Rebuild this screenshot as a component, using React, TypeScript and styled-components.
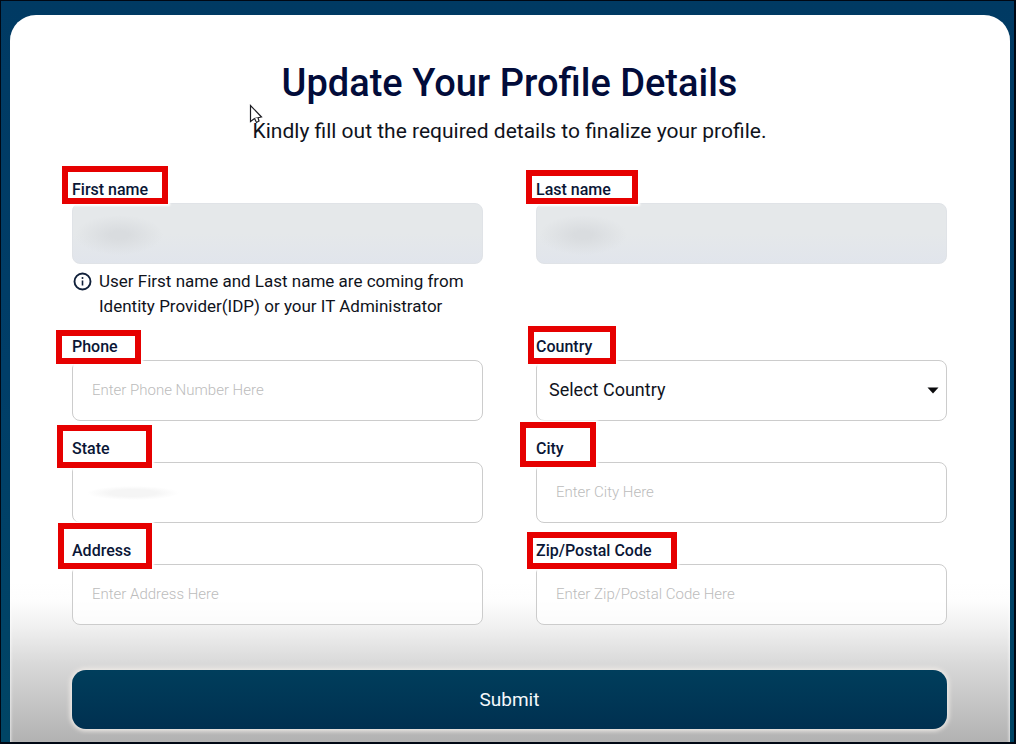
import React from "react";
import styled, { createGlobalStyle } from "styled-components";

const GlobalStyle = createGlobalStyle`
  *, *::before, *::after { box-sizing: border-box; }
  body { margin: 0; background: #003a63; font-family: Roboto, "Liberation Sans", sans-serif; color: #10131c; }
  input, select, button { font-family: inherit; }
`;

const Page = styled.main`
  display: flex;
  min-height: 100vh;
  padding: 14px 4px 0 9px;
  border: 1px solid #000814;
  border-width: 1px 2px 2px 1px;
  background: linear-gradient(180deg, #003a63 0%, #003e68 50%, #004565 100%);
`;

const Card = styled.section`
  flex: 1;
  min-width: 0;
  padding: 46px 63px 13px 62px;
  border-radius: 26px 26px 0 0;
  background: linear-gradient(0deg, #b2b2b2 0, #c6c6c6 40px, #dadada 80px, #efefef 113px, #fdfdfd 140px, #ffffff 160px);
  box-shadow: inset 3px 0 3px -2px #ffffffaa, inset -3px 0 3px -2px #ffffffaa;
`;

const Header = styled.header`
  text-align: center;
`;

const Title = styled.h1`
  margin: 0;
  font-size: 38px;
  line-height: 44px;
  font-weight: 500;
  color: #020c3a;
`;

const Subtitle = styled.p`
  position: relative;
  width: fit-content;
  margin: 13px auto 36px;
  font-size: 21px;
  line-height: 26px;
`;

const Pointer = styled.svg`
  position: absolute;
  left: -4px;
  top: -14px;
  width: 14px;
  height: 22px;
`;

const Form = styled.form`
  display: grid;
  grid-template-columns: 1fr 1fr;
  column-gap: 53px;
  row-gap: 18px;
`;

const Field = styled.div`
  display: flex;
  flex-direction: column;
  gap: 3px;
  min-width: 0;
`;

const LabelRow = styled.div`
  position: relative;
  line-height: 20px;
`;

const Label = styled.label`
  display: block;
  font-size: 16px;
  font-weight: 500;
  color: #0a1636;
`;

const Callout = styled.span<{ $x: number; $y: number; $w: number; $h: number }>`
  position: absolute;
  z-index: 1;
  left: ${(p) => p.$x}px;
  top: ${(p) => p.$y}px;
  width: ${(p) => p.$w}px;
  height: ${(p) => p.$h}px;
  border: 6px solid #e60000;
  box-shadow: 0 0 2px 2px #ffffff;
  pointer-events: none;
`;

const TextInput = styled.input<{ $smudge?: boolean }>`
  width: 100%;
  height: 61px;
  padding: 0 19px 2px;
  border: 1px solid #cccccc;
  border-radius: 8px;
  outline: none;
  background: ${(p) =>
    p.$smudge
      ? "radial-gradient(ellipse 46px 7px at 60px 30px, #f5f5f5 50%, #ffffff00 100%), #ffffff"
      : "#ffffffb8"};
  font-size: 15px;
  font-weight: 300;

  &::placeholder { color: #bcbcbc; opacity: 1; }

  &:disabled {
    border-color: #e0e3e7;
    background: radial-gradient(ellipse 44px 20px at 46px 31px, #d9dcdf 20%, #d9dcdf00 100%),
      linear-gradient(180deg, #e5e8ea 50%, #e1e5ec 100%);
  }
`;

const SelectWrap = styled.div`
  position: relative;
`;

const Select = styled.select`
  display: block;
  width: 100%;
  height: 61px;
  padding: 0 32px 2px 12px;
  border: 1px solid #cccccc;
  border-radius: 8px;
  outline: none;
  appearance: none;
  background: #ffffff;
  font-size: 18px;
  color: #10131c;
`;

const Caret = styled.svg`
  position: absolute;
  right: 8px;
  top: 27px;
  width: 12px;
  height: 7px;
  pointer-events: none;
`;

const Hint = styled.p`
  display: flex;
  gap: 7px;
  margin: 2px 0 0 1px;
  font-size: 17px;
  line-height: 25px;
`;

const InfoIcon = styled.svg`
  flex: none;
  width: 19px;
  height: 19px;
  margin-top: 3px;
`;

const Submit = styled.button`
  grid-column: 1 / -1;
  height: 59px;
  margin-top: 27px;
  padding-bottom: 2px;
  border: 0;
  border-radius: 14px;
  background: linear-gradient(180deg, #003e5c, #003050);
  box-shadow: 0 0 4px 2px #eeeae6;
  font-size: 19px;
  color: #f4f8fb;
`;

type Box = [number, number, number, number];

function FieldLabel({ id, box, children }: { id: string; box: Box; children: string }) {
  return (
    <LabelRow>
      <Label htmlFor={id}>{children}</Label>
      <Callout $x={box[0]} $y={box[1]} $w={box[2]} $h={box[3]} aria-hidden="true" />
    </LabelRow>
  );
}

export default function App() {
  return (
    <>
      <GlobalStyle />
      <Page>
        <Card>
          <Header>
            <Title>Update Your Profile Details</Title>
            <Subtitle>
              Kindly fill out the required details to finalize your profile.
              <Pointer viewBox="0 0 14 22" aria-hidden="true">
                <path d="M1.5 1.5V17.5L5.5 14.5L12.5 13Z" fill="#fff" stroke="#1c1c22" strokeWidth="1.2" />
                <path d="M5.5 14.5L7.5 18.5L10 17L9 13.8" fill="#fff" stroke="#1c1c22" strokeWidth="1.2" />
              </Pointer>
            </Subtitle>
          </Header>
          <Form onSubmit={(e) => e.preventDefault()}>
            <Field>
              <FieldLabel id="first" box={[-10, -14, 106, 38]}>First name</FieldLabel>
              <TextInput id="first" disabled />
              <Hint>
                <InfoIcon viewBox="0 0 19 19" aria-hidden="true">
                  <circle cx="9.5" cy="9.5" r="8" fill="none" stroke="#10203a" strokeWidth="1.9" />
                  <path d="M9.5 8.5V13.5" stroke="#10203a" strokeWidth="1.6" />
                  <circle cx="9.5" cy="6" r="1" fill="#10203a" />
                </InfoIcon>
                <span>
                  User First name and Last name are coming from
                  <br />
                  Identity Provider(IDP) or your IT Administrator
                </span>
              </Hint>
            </Field>
            <Field>
              <FieldLabel id="last" box={[-10, -10, 112, 34]}>Last name</FieldLabel>
              <TextInput id="last" disabled />
            </Field>
            <Field>
              <FieldLabel id="phone" box={[-16, -7, 85, 34]}>Phone</FieldLabel>
              <TextInput id="phone" placeholder="Enter Phone Number Here" />
            </Field>
            <Field>
              <FieldLabel id="country" box={[-8, -11, 88, 38]}>Country</FieldLabel>
              <SelectWrap>
                <Select id="country" defaultValue="">
                  <option value="">Select Country</option>
                </Select>
                <Caret viewBox="0 0 12 7" aria-hidden="true">
                  <path d="M0.5 0.5H11.5L6 6.5Z" fill="#0a0a0c" />
                </Caret>
              </SelectWrap>
            </Field>
            <Field>
              <FieldLabel id="state" box={[-15, -14, 95, 43]}>State</FieldLabel>
              <TextInput id="state" $smudge />
            </Field>
            <Field>
              <FieldLabel id="city" box={[-16, -17, 76, 45]}>City</FieldLabel>
              <TextInput id="city" placeholder="Enter City Here" />
            </Field>
            <Field>
              <FieldLabel id="address" box={[-14, -18, 94, 46]}>Address</FieldLabel>
              <TextInput id="address" placeholder="Enter Address Here" />
            </Field>
            <Field>
              <FieldLabel id="zip" box={[-9, -9, 150, 37]}>Zip/Postal Code</FieldLabel>
              <TextInput id="zip" placeholder="Enter Zip/Postal Code Here" />
            </Field>
            <Submit type="submit">Submit</Submit>
          </Form>
        </Card>
      </Page>
    </>
  );
}
